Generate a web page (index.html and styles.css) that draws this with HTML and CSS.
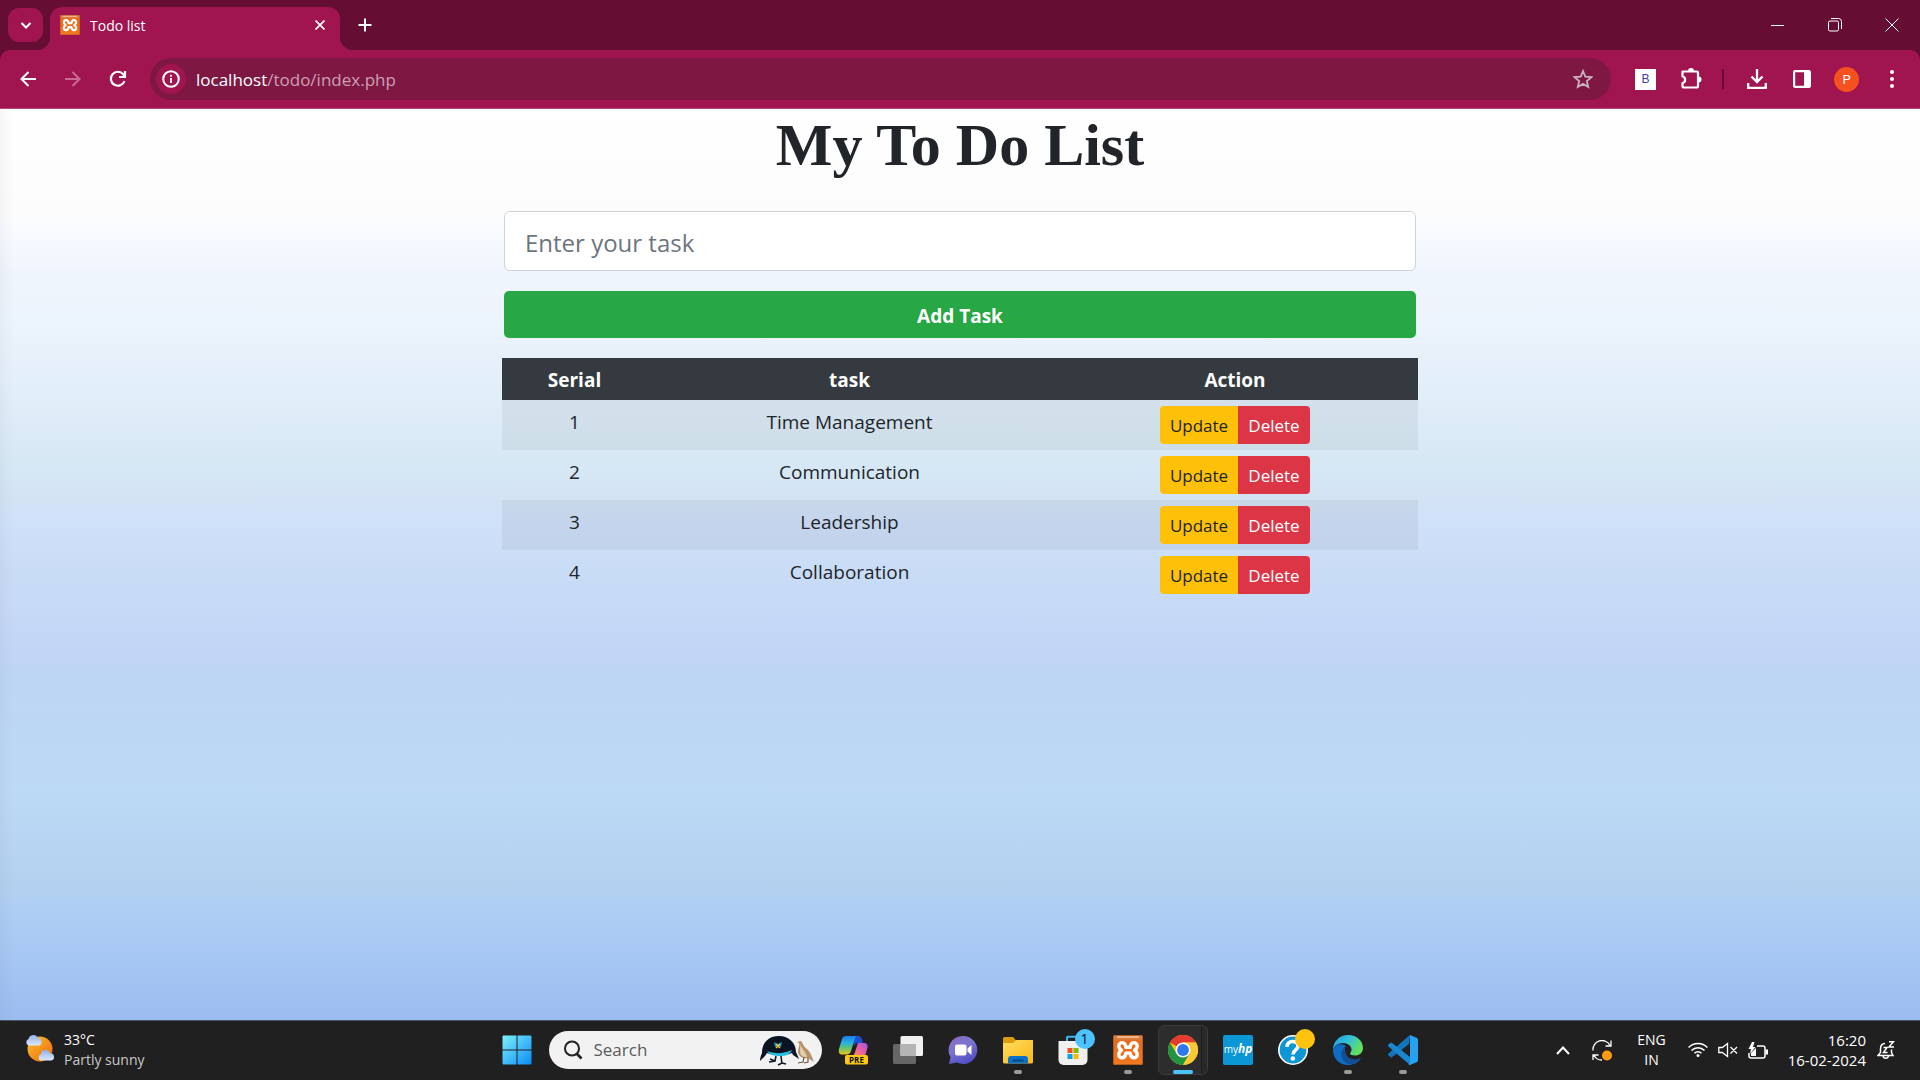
FILE: index.html
```html
<!DOCTYPE html>
<html lang="en">
<head>
<meta charset="utf-8">
<meta name="viewport" content="width=device-width, initial-scale=1">
<title>Todo list</title>
<link rel="stylesheet" href="styles.css">
</head>
<body>
<svg class="defs" aria-hidden="true">
  <defs>
    <linearGradient id="orange" x1="0" y1="0" x2="0" y2="1"><stop offset="0" stop-color="#c98457"/><stop offset=".12" stop-color="#d9803f"/><stop offset=".2" stop-color="#e8691a"/><stop offset="1" stop-color="#f07a22"/></linearGradient>
    <symbol id="xampp" viewBox="0 0 30 30">
      <rect width="30" height="30" rx="2" fill="url(#orange)"/>
      <rect x=".5" y=".5" width="29" height="29" rx="2" fill="none" stroke="#b35c1c"/>
      <rect x="4" y="1" width="22" height="2" rx="1" fill="#eeb48c"/>
      <path d="M12.800 12.300C12.500 6 5.800 6.500 5.800 11c0 2 1 3.200 2.700 4.200-1.700 1-2.700 2.200-2.700 4.200 0 4.500 6.700 5 7-1.300h4.400c.3 6.300 7 5.800 7 1.300 0-2-1-3.200-2.700-4.200 1.700-1 2.700-2.200 2.700-4.200 0-4.500-6.700-5-7 1.300z" fill="none" stroke="#fff" stroke-width="3.400" stroke-linejoin="round"/>
    </symbol>
  </defs>
</svg>

<header class="browser">
  <div class="tabstrip">
    <button class="tab-search" aria-label="Search tabs"><svg width="12" height="12" viewBox="0 0 12 12"><path d="M1.500 4 6 8.500 10.500 4" fill="none" stroke="#fff" stroke-width="2"/></svg></button>
    <div class="tab">
      <svg width="20" height="20"><use href="#xampp"/></svg>
      <span class="tab-title">Todo list</span>
      <button class="tab-close" aria-label="Close tab"><svg width="10" height="10" viewBox="0 0 10 10"><path d="M.5.5l9 9M9.500.5l-9 9" stroke="#fff" stroke-width="1.700"/></svg></button>
    </div>
    <button class="new-tab" aria-label="New tab"><svg width="14" height="14" viewBox="0 0 14 14"><path d="M7 .5v13M.5 7h13" stroke="#fff" stroke-width="2"/></svg></button>
    <div class="window-controls">
      <button aria-label="Minimize"><svg width="14" height="14" viewBox="0 0 14 14"><path d="M0 7.500h13" stroke="#fff"/></svg></button>
      <button aria-label="Restore"><svg width="14" height="14" viewBox="0 0 14 14" fill="none" stroke="#fff"><rect x=".5" y="3" width="10" height="10" rx="1.500"/><path d="M3 .5h7.500a3 3 0 0 1 3 3V11"/></svg></button>
      <button aria-label="Close"><svg width="14" height="14" viewBox="0 0 14 14"><path d="M.5.5l13 13M13.500.5l-13 13" stroke="#fff"/></svg></button>
    </div>
  </div>
  <nav class="toolbar" aria-label="Browser">
    <button class="tool" aria-label="Back"><svg width="16" height="16" viewBox="0 0 16 16"><path d="M16 8H2M8.500 1 1.500 8l7 7" fill="none" stroke="#fff" stroke-width="2"/></svg></button>
    <button class="tool" aria-label="Forward"><svg width="16" height="16" viewBox="0 0 16 16"><path d="M0 8h14M7.500 1l7 7-7 7" fill="none" stroke="#c96c93" stroke-width="2"/></svg></button>
    <button class="tool" aria-label="Reload"><svg width="18" height="18" viewBox="0 0 18 18"><path d="M15.500 11A7 7 0 1 1 14.300 4.300L15.500 6" fill="none" stroke="#fff" stroke-width="2.200"/><path d="M16 1v6h-6" fill="none" stroke="#fff" stroke-width="2.200"/></svg></button>
    <div class="address">
      <button class="site-info" aria-label="Site information"><svg width="18" height="18" viewBox="0 0 18 18"><circle cx="9" cy="9" r="7.800" fill="none" stroke="#fff" stroke-width="2"/><path d="M9 8v5M9 4.800v2" stroke="#fff" stroke-width="1.800"/></svg></button>
      <span class="url">localhost<span class="path">/todo/index.php</span></span>
      <button class="star" aria-label="Bookmark"><svg width="20" height="20" viewBox="0 0 20 20"><path d="M10 2l2.300 5.600 6.100.5-4.600 4 1.400 5.900L10 14.900 4.800 18l1.400-5.900-4.600-4 6.100-.5z" fill="none" stroke="#c9b3bd" stroke-width="1.800"/></svg></button>
    </div>
    <button class="tool" aria-label="Extension"><span class="ext">B</span></button>
    <button class="tool" aria-label="Extensions"><svg width="22" height="22" viewBox="0 0 22 22"><path d="M2.500 3.500H17a1 1 0 0 1 1 1V18a1.500 1.500 0 0 1-1.500 1.500H4A1.500 1.500 0 0 1 2.500 18v-3c3.500-.5 3.500-6 0-6.500z" fill="none" stroke="#fff" stroke-width="2.200" stroke-linejoin="round"/><path d="M8 3a3 3 0 0 1 6 0zM18.500 8.500a3 3 0 0 1 0 6z" fill="#fff"/></svg></button>
    <span class="divider"></span>
    <button class="tool" aria-label="Downloads"><svg width="20" height="20" viewBox="0 0 20 20"><path d="M10 0v12M4.500 7.500 10 13l5.500-5.500M1.200 14v4.800h17.600V14" fill="none" stroke="#fff" stroke-width="2.300"/></svg></button>
    <button class="tool" aria-label="Side panel"><svg width="18" height="18" viewBox="0 0 18 18"><rect x="1.100" y="1.100" width="15.800" height="15.800" rx="1" fill="none" stroke="#fff" stroke-width="2.200"/><path d="M11 1h6v16h-6z" fill="#fff"/></svg></button>
    <button class="tool" aria-label="Profile"><span class="avatar">P</span></button>
    <button class="tool" aria-label="Menu"><svg width="4" height="18" viewBox="0 0 4 18" fill="#fff"><circle cx="2" cy="2" r="2"/><circle cx="2" cy="9" r="2"/><circle cx="2" cy="16" r="2"/></svg></button>
  </nav>
</header>

<main class="page">
  <h1>My To Do List</h1>
  <form class="task-form">
    <input class="task-input" type="text" placeholder="Enter your task" aria-label="Enter your task">
    <button class="add" type="button">Add Task</button>
  </form>
  <table class="tasks">
    <thead><tr><th class="serial">Serial</th><th class="name">task</th><th>Action</th></tr></thead>
    <tbody>
      <tr><td>1</td><td>Time Management</td><td class="action"><div class="group"><a class="update" href="#">Update</a><a class="delete" href="#">Delete</a></div></td></tr>
      <tr><td>2</td><td>Communication</td><td class="action"><div class="group"><a class="update" href="#">Update</a><a class="delete" href="#">Delete</a></div></td></tr>
      <tr><td>3</td><td>Leadership</td><td class="action"><div class="group"><a class="update" href="#">Update</a><a class="delete" href="#">Delete</a></div></td></tr>
      <tr><td>4</td><td>Collaboration</td><td class="action"><div class="group"><a class="update" href="#">Update</a><a class="delete" href="#">Delete</a></div></td></tr>
    </tbody>
  </table>
</main>

<footer class="taskbar">
  <button class="weather" aria-label="Weather">
    <svg width="30" height="28" viewBox="0 0 30 28">
      <defs><linearGradient id="sun" x1="0" y1="0" x2="1" y2="1"><stop offset="0" stop-color="#f9c22e"/><stop offset="1" stop-color="#f2650d"/></linearGradient>
      <linearGradient id="cloud" x1="0" y1="0" x2="0" y2="1"><stop offset="0" stop-color="#8fb0ea"/><stop offset="1" stop-color="#dde9fb"/></linearGradient></defs>
      <circle cx="15" cy="15" r="12.500" fill="url(#sun)"/>
      <path d="M3.500 11.500a3.500 3.500 0 0 1 0-6.500 5 5 0 0 1 9.500-1 4 4 0 0 1 1.500 7.500z" fill="url(#cloud)"/>
      <path d="M16 26.500a3.200 3.200 0 0 1 0-6.200 4.600 4.600 0 0 1 9-1 3.700 3.700 0 0 1 1.500 7.200z" fill="url(#cloud)"/>
    </svg>
    <span class="weather-text"><span>33°C</span><span class="dim">Partly sunny</span></span>
  </button>

  <div class="apps">
    <button class="app" aria-label="Start"><svg width="30" height="30" viewBox="0 0 30 30"><defs><linearGradient id="win" x1="0" y1="0" x2="1" y2="1"><stop offset="0" stop-color="#7df0fb"/><stop offset="1" stop-color="#0a8cf5"/></linearGradient></defs><path d="M1.500.5H14.500v14H.5v-13a1 1 0 0 1 1-1zM15.500.5h13a1 1 0 0 1 1 1v13h-14zM.5 15.500h14v14h-13a1 1 0 0 1-1-1zM15.500 15.500h14v13a1 1 0 0 1-1 1h-13z" fill="url(#win)"/></svg></button>
    <label class="search">
      <svg width="20" height="20" viewBox="0 0 20 20"><circle cx="9" cy="8.500" r="7" fill="none" stroke="#222" stroke-width="2"/><path d="M13.500 13.500l5 5" stroke="#222" stroke-width="2.600"/></svg>
      <input type="text" placeholder="Search" aria-label="Search">
      <svg width="58" height="32" viewBox="0 0 58 32">
        <path d="M4 19C4 8 11 2 21 2s17 7 17 16l3 7-6-4-1-2c-7 3-18 3-25 0l-2 3-5 5c0-3 1-6 2-8z" fill="#0b1422"/>
        <path d="M9 17c8 3 16 3 25-1-2 5-7 6-12 6S11 21 9 17z" fill="#28bfe0"/>
        <path d="M16 8l4 2 4-2-1 5-3-1-3 1z" fill="#1d8fc0"/><path d="M18 10l4 4M22 10l-4 4" stroke="#e9c63a" stroke-width="1.500"/>
        <path d="M18 22l-1 5-6 1M23 22l1 8M20 31l4-2 4 1M12 25l5 2" fill="none" stroke="#131c2b" stroke-width="1.600"/>
        <path d="M39 8l4-1c2 2 2 5 6 8 4 4 5 8 7 13l-6-4c-5 1-9-1-10-6 0-4 2-6 1-9z" fill="#b99168"/>
        <path d="M42 10c1 4-1 7 1 11 2 2 4 2 6 2-1-5-5-8-7-13z" fill="#e2cdb0"/>
        <path d="M46 23l-1 5-5 1M50 24v4l-4 1" fill="none" stroke="#6c5945" stroke-width="1.200"/>
      </svg>
    </label>
    <button class="app" aria-label="Copilot"><svg width="30" height="30" viewBox="0 0 30 30">
      <defs><linearGradient id="cpa" x1="0" y1="0" x2="0" y2="1"><stop offset="0" stop-color="#1c7bea"/><stop offset=".35" stop-color="#27aee4"/><stop offset=".65" stop-color="#5cc470"/><stop offset="1" stop-color="#f0c51c"/></linearGradient><linearGradient id="cpb" x1="1" y1="0" x2="0" y2="1"><stop offset="0" stop-color="#9b54ea"/><stop offset=".5" stop-color="#ec5da0"/><stop offset="1" stop-color="#fb9f4d"/></linearGradient></defs>
      <path d="M15 1h5c2 0 3 1 4 3l1 4h-5c-2 0-3 1-4 3z" fill="#1b4fd0"/>
      <path d="M8 1h12c-2 0-3 2-3.500 4L13 16c-.7 2-2 3.500-4.500 3.500H4C1 19.500.3 17 1 14L4 4c.7-2 2-3 4-3z" fill="url(#cpa)"/>
      <path d="M20 8h6c3 0 4 2 3.500 4.500L28 18c-.5 2-1 3-3 3H13c2 0 3-1 3.700-3z" fill="url(#cpb)"/>
      <rect x="7" y="20" width="23" height="9.500" rx="2" fill="#ffc814"/>
      <text class="pre" x="18.500" y="28" text-anchor="middle">PRE</text></svg></button>
    <button class="app" aria-label="Task view"><svg width="30" height="30" viewBox="0 0 30 30"><rect y="9" width="23" height="20" rx="1.500" fill="#666"/><rect x="7.500" y="1" width="22.500" height="20" rx="1.500" fill="#f0f0f0"/><path d="M7.500 9H23v12H7.500z" fill="#b4b4b4"/></svg></button>
    <button class="app" aria-label="Chat"><svg width="30" height="30" viewBox="0 0 30 30"><defs><linearGradient id="chat" x1="0" y1="0" x2=".5" y2="1"><stop offset="0" stop-color="#8e6bc0"/><stop offset=".5" stop-color="#7b74d2"/><stop offset="1" stop-color="#5450c4"/></linearGradient></defs><path d="M15 1a14 14 0 1 1-6 26.500L1 29l1.500-7A14 14 0 0 1 15 1z" fill="url(#chat)"/><rect x="7" y="9.500" width="11.500" height="11" rx="2" fill="#fff"/><path d="M19.500 13.500l4-3.500v10l-4-3.500z" fill="#fff"/></svg></button>
    <button class="app open" aria-label="File Explorer"><svg width="30" height="30" viewBox="0 0 30 30"><defs><linearGradient id="fold" x1="0" y1="0" x2="1" y2="1"><stop offset="0" stop-color="#ffdc62"/><stop offset="1" stop-color="#fbb914"/></linearGradient></defs><path d="M0 3.500a1.500 1.500 0 0 1 1.500-1.500H10l3 3.500h10V12H0z" fill="#dc9c0b"/><path d="M0 8h10l3-3h17v22a1.500 1.500 0 0 1-1.500 1.500h-27A1.500 1.500 0 0 1 0 27z" fill="url(#fold)"/><path d="M5 28.500V24a3 3 0 0 1 3-3h14a3 3 0 0 1 3 3v4.500z" fill="#0b72c8"/><path d="M9.500 25.500h11" stroke="#074a88" stroke-width="2"/></svg></button>
    <button class="app" aria-label="Microsoft Store"><svg width="30" height="30" viewBox="0 0 30 30"><path d="M9 7V2.500a.7.7 0 0 1 .7-.7H20" fill="none" stroke="#35b7ef" stroke-width="2"/><path d="M.5 6h29v19a5 5 0 0 1-5 5h-19a5 5 0 0 1-5-5z" fill="#f0f0f0"/><path d="M9.500 13h5v5h-5z" fill="#f25022"/><path d="M15.500 13h5v5h-5z" fill="#7fba00"/><path d="M9.500 19h5v5h-5z" fill="#00a4ef"/><path d="M15.500 19h5v5h-5z" fill="#ffb900"/></svg><span class="badge">1</span></button>
    <button class="app open" aria-label="XAMPP"><svg width="30" height="30"><use href="#xampp"/></svg></button>
    <button class="app active" aria-label="Chrome"><svg width="30" height="30" viewBox="0 0 48 48"><circle cx="24" cy="24" r="24" fill="#fbc116"/><path d="M24 24 3.200 12A24 24 0 0 1 44.800 12H24z" fill="#e33b2e"/><path d="M3.200 12A24 24 0 0 0 24 48L34.400 30 24 24 13.600 30z" fill="#229342"/><path d="M24 12h20.800A24 24 0 0 1 24 48l10.400-18z" fill="#fcc934"/><circle cx="24" cy="24" r="12" fill="#fff"/><circle cx="24" cy="24" r="9.500" fill="#2f78ee"/></svg></button>
    <button class="app" aria-label="myHP"><span class="myhp">my<b>hp</b></span></button>
    <button class="app" aria-label="HP Support"><svg width="30" height="30" viewBox="0 0 30 30"><circle cx="15" cy="15" r="14.200" fill="#0d96d6" stroke="#fff" stroke-width="1.600"/><path d="M9 12c0-7.500 11-7 11-1 0 4-5 4-5 8.500" fill="none" stroke="#fff" stroke-width="3.600"/><circle cx="14.800" cy="23.500" r="2.300" fill="#fff"/></svg><span class="badge alert"></span></button>
    <button class="app open" aria-label="Edge"><svg width="30" height="30" viewBox="0 0 30 30"><defs><linearGradient id="edge" x1="0" y1="0" x2="1" y2=".4"><stop offset="0" stop-color="#1b9de2"/><stop offset=".55" stop-color="#35c1d8"/><stop offset="1" stop-color="#62e05a"/></linearGradient></defs><path d="M0 15C2 9 9 8 13 11c-4 3-4 9 0 12 4 4 10 4 15 0-3 5-8 7-13 7C7 30 0 24 0 15z" fill="#0f6cc4"/><path d="M12 12c-5 3-6 15 6 17.500 4-1 8-3 10-6.500-6 3-13 1-15-4-1-3-1-5-1-7z" fill="#124e96"/><path d="M0 15C0 6 7 0 15 0c9 0 15 6 15 13 0 5-4 7.500-8 7.500-3 0-5-1-5-2 0-.8 1.500-1.500 1.500-4C18.500 11 15 8 10 8 5 8 1 11 0 15z" fill="url(#edge)"/></svg></button>
    <button class="app open" aria-label="Visual Studio Code"><svg width="30" height="30" viewBox="0 0 30 30"><path d="M22 0l-1 9L3.500 22.500 1 21q-2-1.500 0-3z" fill="#1176bd"/><path d="M1 12q-2-1.500 0-3l2.500-1.500L22 22v8z" fill="#1a85d0"/><path d="M22 0l7 3q1 .5 1 1.700v20.600q0 1.200-1 1.700l-7 3q-1 .3-1.500-.7L22 28z" fill="#27a2f2"/></svg></button>
  </div>

  <div class="tray">
    <button aria-label="Show hidden icons"><svg width="14" height="9" viewBox="0 0 14 9"><path d="M1 8l6-6.500L13 8" fill="none" stroke="#fff" stroke-width="2"/></svg></button>
    <button class="sync" aria-label="Update available"><svg width="20" height="21" viewBox="0 0 20 21"><path d="M1 10.500A9 9 0 0 1 18 5.500M19 .5v5.500h-5.500M10 20a9 9 0 0 1-8-4.500M1 20v-5h5.500" fill="none" stroke="#fff" stroke-width="1.300"/><circle cx="15" cy="15.500" r="5" fill="#ff9b0c"/></svg></button>
    <button class="lang">ENG<br>IN</button>
    <button class="status" aria-label="Network, sound and battery">
      <svg width="20" height="16" viewBox="0 0 20 16" fill="none" stroke="#fff" stroke-width="1.600"><path d="M.6 5.500a13 13 0 0 1 18.800 0M3.500 8.500a9 9 0 0 1 13 0M6.500 11.300a5 5 0 0 1 7 0"/><circle cx="10" cy="13.500" r="1.500" fill="#fff" stroke="none"/></svg>
      <svg width="20" height="16" viewBox="0 0 20 16" fill="none" stroke="#fff" stroke-width="1.300"><path d="M.8 5.500h3.500L9.500 1.500v13l-5.200-4H.8zM12.500 5l6.500 6.500M19 5l-6.500 6.500"/></svg>
      <svg width="20" height="17" viewBox="0 0 20 17"><path d="M9 4h6a2 2 0 0 1 2 2v8a2 2 0 0 1-2 2H3a2 2 0 0 1-2-2v-3" fill="none" stroke="#fff" stroke-width="1.500"/><path d="M17.500 7.500H20v5h-2.500zM3 14v-3l5-5v8z" fill="#fff"/><path d="M4 0 .5 7H3l-1 5 5.500-7H5l1.500-5z" fill="#fff"/></svg>
    </button>
    <button class="clock">16:20<br>16-02-2024</button>
    <button aria-label="Notifications"><svg width="18" height="20" viewBox="0 0 18 20" fill="none" stroke="#fff" stroke-width="1.500"><path d="M8 3.500C5 3.500 3.500 6 3.500 9v3.500L1 15.500h15l-1.500-3V9.500M6 16c.5 3 5 3 5.500 0"/><path d="M6.500 7.500H10l-3.500 5H10.500M12 1.700h4.500L12 7h5"/></svg></button>
  </div>
</footer>
</body>
</html>
```
FILE: styles.css
```css
* { box-sizing: border-box; }

body {
  margin: 0;
  min-height: 100vh;
  display: flex;
  flex-direction: column;
  font-family: "Open Sans", "Noto Sans", sans-serif;
  font-size: 19px;
  color: #212529;
}

button, input { font: inherit; }

button {
  margin: 0;
  padding: 0;
  border: 0;
  background: none;
  color: inherit;
}

svg { display: block; flex: none; }

.defs { position: absolute; width: 0; height: 0; }

/* Browser frame */
.browser { background: #650d32; color: #fff; }

.tabstrip { display: flex; height: 50px; padding-left: 8px; }

.tab-search {
  position: relative;
  z-index: 1;
  width: 35px;
  height: 34px;
  margin: 8px 7px 0 0;
  border-radius: 11px;
  background: #a0144f;
  display: grid;
  place-items: center;
}

.tab {
  position: relative;
  display: flex;
  align-items: center;
  gap: 10px;
  width: 290px;
  height: 43px;
  margin-top: 7px;
  padding: 0 12px 7px 10px;
  border-radius: 12px 12px 0 0;
  background: #a0144f;
}

.tab::before, .tab::after {
  content: "";
  position: absolute;
  bottom: 0;
  width: 14px;
  height: 14px;
}
.tab::before { right: 100%; background: radial-gradient(circle at 0 0, #650d32 14px, #a0144f 15px); }
.tab::after { left: 100%; background: radial-gradient(circle at 100% 0, #650d32 14px, #a0144f 15px); }

.tab-title { flex: 1; font-size: 14px; }
.tab-close, .new-tab { display: grid; place-items: center; }
.tab-close { width: 16px; height: 20px; }
.new-tab { width: 50px; }

.window-controls { display: flex; margin-left: auto; }
.window-controls button { width: 57px; display: grid; place-items: center; }

.toolbar {
  display: flex;
  align-items: center;
  height: 59px;
  padding: 0 6px 0 5px;
  border-bottom: 1px solid #b8487a;
  border-radius: 10px 10px 0 0;
  background: #a0144f;
}

.tool { width: 45px; height: 42px; display: grid; place-items: center; }

.address {
  flex: 1;
  display: flex;
  align-items: center;
  height: 42px;
  margin: 0 12px 0 10px;
  padding: 0 18px 0 6px;
  border-radius: 21px;
  background: #7e1843;
}

.site-info {
  width: 30px;
  height: 30px;
  margin-right: 10px;
  border-radius: 50%;
  background: #a0144f;
  display: grid;
  place-items: center;
}

.url { flex: 1; font-size: 17px; }
.path { color: #cb9fb3; }

.ext {
  width: 21px;
  height: 21px;
  background: #fff;
  color: #3a3fb0;
  font: 12px/21px "Liberation Sans", sans-serif;
}

.divider { width: 2px; height: 20px; margin: 0 10px 0 9px; background: #650d32; }

.avatar {
  width: 25px;
  height: 25px;
  border-radius: 50%;
  background: #f4511e;
  font: 13px/25px Roboto, sans-serif;
}

/* Page */
.page {
  flex: 1;
  display: flex;
  flex-direction: column;
  align-items: center;
  background:
    linear-gradient(90deg, rgba(40, 50, 70, .04), rgba(40, 50, 70, 0) 14px),
    linear-gradient(#fff 0, #fcfcfc 11%, #f9fbff 13%, #f0f5fd 18%, #eaf3fc 25%, #e7effa 28%, #e3f0fb 30%, #dcebf7 35%, #d8e9f5 38%, #d3e3f5 43%, #d0e1fa 45%, #c9dcf6 51%, #c5d8f6 56%, #c2d5f6 60%, #bdd6f4 62%, #bcd9f5 75%, #b3d0f0 86%, #b0cff4 87%, #9cbcf1 100%);
}

h1 {
  margin: 0 0 30px;
  font: bold 60px/72px "Liberation Serif", serif;
}

.task-form {
  display: flex;
  flex-direction: column;
  gap: 20px;
  width: 912px;
  max-width: 100%;
  margin-bottom: 20px;
}

.task-input {
  height: 60px;
  padding: 2px 20px 0;
  border: 1px solid #ced4da;
  border-radius: 6px;
  background: #fff;
  font-size: 24px;
}
.task-input::placeholder { color: #6c757d; opacity: 1; }

.add {
  height: 47px;
  padding-top: 2px;
  border-radius: 5px;
  background: #28a745;
  color: #fff;
  font-weight: 700;
}

.tasks {
  width: 916px;
  max-width: 100%;
  table-layout: fixed;
  border-collapse: collapse;
  text-align: center;
  line-height: 32px;
}
.serial { width: 145px; }
.name { width: 405px; }

th { height: 42px; padding: 2px 0 0; background: #343a40; color: #fff; font-weight: 700; }
td { height: 50px; padding: 6px 0; vertical-align: top; }
tbody tr:nth-child(odd) { background: rgba(0, 0, 0, .05); }

.group { display: inline-flex; vertical-align: top; border-radius: 4px; overflow: hidden; }
.group a { height: 38px; line-height: 40px; font-size: 17px; text-decoration: none; }
.update { width: 78px; background: #ffc107; color: #212529; }
.delete { width: 72px; background: #dc3545; color: #fff; }

/* Taskbar */
.taskbar {
  display: grid;
  grid-template-columns: 1fr auto 1fr;
  height: 60px;
  box-shadow: inset 0 1px #4a5462;
  background: #202020;
  color: #fff;
  font-size: 14px;
  line-height: 20px;
}

.weather { display: flex; align-items: center; gap: 9px; padding: 0 25px; text-align: left; }
.weather svg { margin-bottom: 4px; }
.weather-text { display: flex; flex-direction: column; }
.dim { color: #c8c8c8; }

.apps { display: flex; align-items: center; }

.app {
  position: relative;
  width: 55px;
  height: 50px;
  display: grid;
  place-items: center;
}

.open::after, .active::after {
  content: "";
  position: absolute;
  left: 23px;
  bottom: 1px;
  width: 8px;
  height: 4px;
  border-radius: 2px;
  background: #9a9a9a;
}
.active {
  width: 50px;
  margin: 0 3px 0 2px;
  border: 1px solid #3a3a3a;
  border-radius: 6px;
  background: linear-gradient(90deg, #2d2d2d 42px, #1c1c1c 42px, #1c1c1c 43px, #292929 43px);
}
.active::after { left: 14px; bottom: 0; width: 20px; background: #4cc2ff; }

.search {
  display: flex;
  align-items: center;
  width: 273px;
  height: 38px;
  margin: 0 4px;
  padding: 0 6px 0 14px;
  border-radius: 19px;
  background: #f2f2f2;
}
.search input {
  flex: 1;
  min-width: 0;
  padding: 0 11px;
  border: 0;
  background: none;
  font-size: 17px;
}
.search input::placeholder { color: #5c5c5c; opacity: 1; }

.pre { font: 700 8px "Open Sans", sans-serif; fill: #111; }

.badge {
  position: absolute;
  top: 4px;
  right: 6px;
  width: 20px;
  height: 20px;
  border-radius: 50%;
  background: #4cc2ff;
  color: #111;
}
.alert { background: #ffc20e; }

.myhp {
  width: 30px;
  height: 30px;
  border-radius: 2px;
  background: #0b96d6;
  font-size: 10px;
  line-height: 28px;
}
.myhp b { font-style: italic; font-size: 12px; }

.tray { display: flex; align-items: center; justify-content: flex-end; padding-right: 25px; }
.sync { margin: 0 25px 0 22px; }
.lang { margin-right: 22px; text-align: center; }
.status { display: flex; align-items: center; gap: 10px; margin-right: 20px; }
.clock { margin-right: 11px; font-size: 15px; text-align: right; }
```
